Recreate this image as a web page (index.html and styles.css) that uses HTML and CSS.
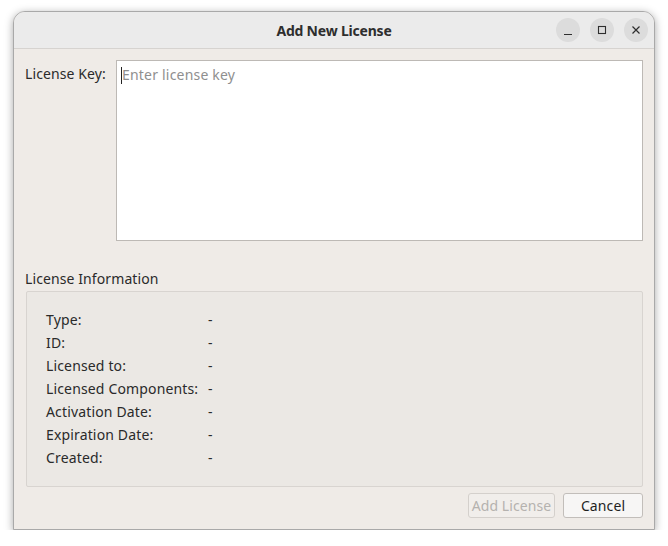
FILE: index.html
```html
<!DOCTYPE html>
<html>
<head>
<meta charset="utf-8">
<link rel="stylesheet" href="styles.css">
</head>
<body>
<div class="window">
  <div class="titlebar">
    <div class="title">Add New License</div>
    <div class="controls">
      <span class="ctl"><svg width="24" height="24" viewBox="0 0 24 24"><path d="M8 16.5h8" stroke="#2e2e2e" stroke-width="1.2"/></svg></span>
      <span class="ctl"><svg width="24" height="24" viewBox="0 0 24 24"><rect x="8.5" y="8.5" width="7" height="7" fill="none" stroke="#2e2e2e" stroke-width="1.1"/></svg></span>
      <span class="ctl"><svg width="24" height="24" viewBox="0 0 24 24"><path d="M8.5 8.5l7 7M15.5 8.5l-7 7" stroke="#2e2e2e" stroke-width="1.2"/></svg></span>
    </div>
  </div>
  <div class="content">
    <div class="keyrow">
      <label class="keylabel">License Key:</label>
      <div class="textarea"><span class="caret"></span><span class="placeholder">Enter license key</span></div>
    </div>
    <div class="grouptitle">License Information</div>
    <div class="group">
      <div class="grid">
        <span>Type:</span><span>-</span>
        <span>ID:</span><span>-</span>
        <span>Licensed to:</span><span>-</span>
        <span>Licensed Components:</span><span>-</span>
        <span>Activation Date:</span><span>-</span>
        <span>Expiration Date:</span><span>-</span>
        <span>Created:</span><span>-</span>
      </div>
    </div>
    <div class="buttons">
      <button class="btn disabled">Add License</button>
      <button class="btn">Cancel</button>
    </div>
  </div>
</div>
</body>
</html>
```
FILE: styles.css
```css
html, body {
  margin: 0;
  padding: 0;
  background: #ffffff;
}
body {
  font-family: "Noto Sans", "DejaVu Sans", sans-serif;
  font-size: 14px;
  color: #2a2a2a;
}
.window {
  margin: 11px 0 0 13px;
  width: 640px;
  height: 517px;
  border: 1px solid #a9a9a9;
  border-radius: 12px 12px 0 0;
  background: #efebe7;
  box-shadow: 0 2px 8px rgba(0,0,0,0.35);
  overflow: hidden;
  display: flex;
  flex-direction: column;
}
.titlebar {
  height: 36px;
  background: #ebebeb;
  border-bottom: 1px solid #d6d3d0;
  position: relative;
  display: flex;
  align-items: center;
  justify-content: center;
}
.title {
  font-weight: bold;
  font-size: 14px;
  color: #2e2e2e;
  letter-spacing: -0.2px;
}
.controls {
  position: absolute;
  right: 6px;
  top: 6px;
  display: flex;
  gap: 10px;
}
.ctl {
  width: 24px;
  height: 24px;
  border-radius: 50%;
  background: #dcdcdc;
  display: block;
}
.ctl svg { display: block; }
.content {
  flex: 1;
  padding: 11px 11px 10px 11px;
  display: flex;
  flex-direction: column;
}
.keyrow {
  display: flex;
  gap: 9px;
}
.keylabel {
  width: 82px;
  padding-top: 4px;
  letter-spacing: 0.1px;
  color: #2a2a2a;
}
.textarea {
  flex: 1;
  height: 181px;
  box-sizing: border-box;
  background: #ffffff;
  border: 1px solid #bdb9b5;
  display: flex;
  align-items: flex-start;
  padding: 4px 0 0 4px;
}
.caret {
  width: 1px;
  height: 17px;
  background: #222;
  margin-top: 2px;
}
.placeholder {
  color: #8f8f8f;
  letter-spacing: 0.2px;
}
.grouptitle {
  margin-top: 28px;
  letter-spacing: 0.1px;
  line-height: 20px;
}
.group {
  margin: 2px 0 0 1px;
  height: 196px;
  border: 1px solid #d8d4d0;
  border-radius: 2px;
  background: #ebe8e4;
  padding: 16px 0 0 19px;
  box-sizing: border-box;
}
.grid {
  display: grid;
  grid-template-columns: 162px auto;
  grid-auto-rows: 22.95px;
  align-items: center;
  letter-spacing: 0.15px;
}
.buttons {
  margin-top: 6px;
  display: flex;
  justify-content: flex-end;
  gap: 8px;
}
.btn {
  font-family: "Noto Sans", "DejaVu Sans", sans-serif;
  font-size: 14px;
  height: 25px;
  padding: 0;
  white-space: nowrap;
  border: 1px solid #c2beba;
  border-radius: 3px;
  background: #f7f6f5;
  color: #1f1f1f;
  letter-spacing: 0.1px;
  flex: none;
}
.btn:first-child { width: 87px; }
.btn:last-child { width: 80px; }
.btn.disabled {
  color: #b5b2af;
  border-color: #d4d0cc;
  background: #f1eeeb;
}
```
